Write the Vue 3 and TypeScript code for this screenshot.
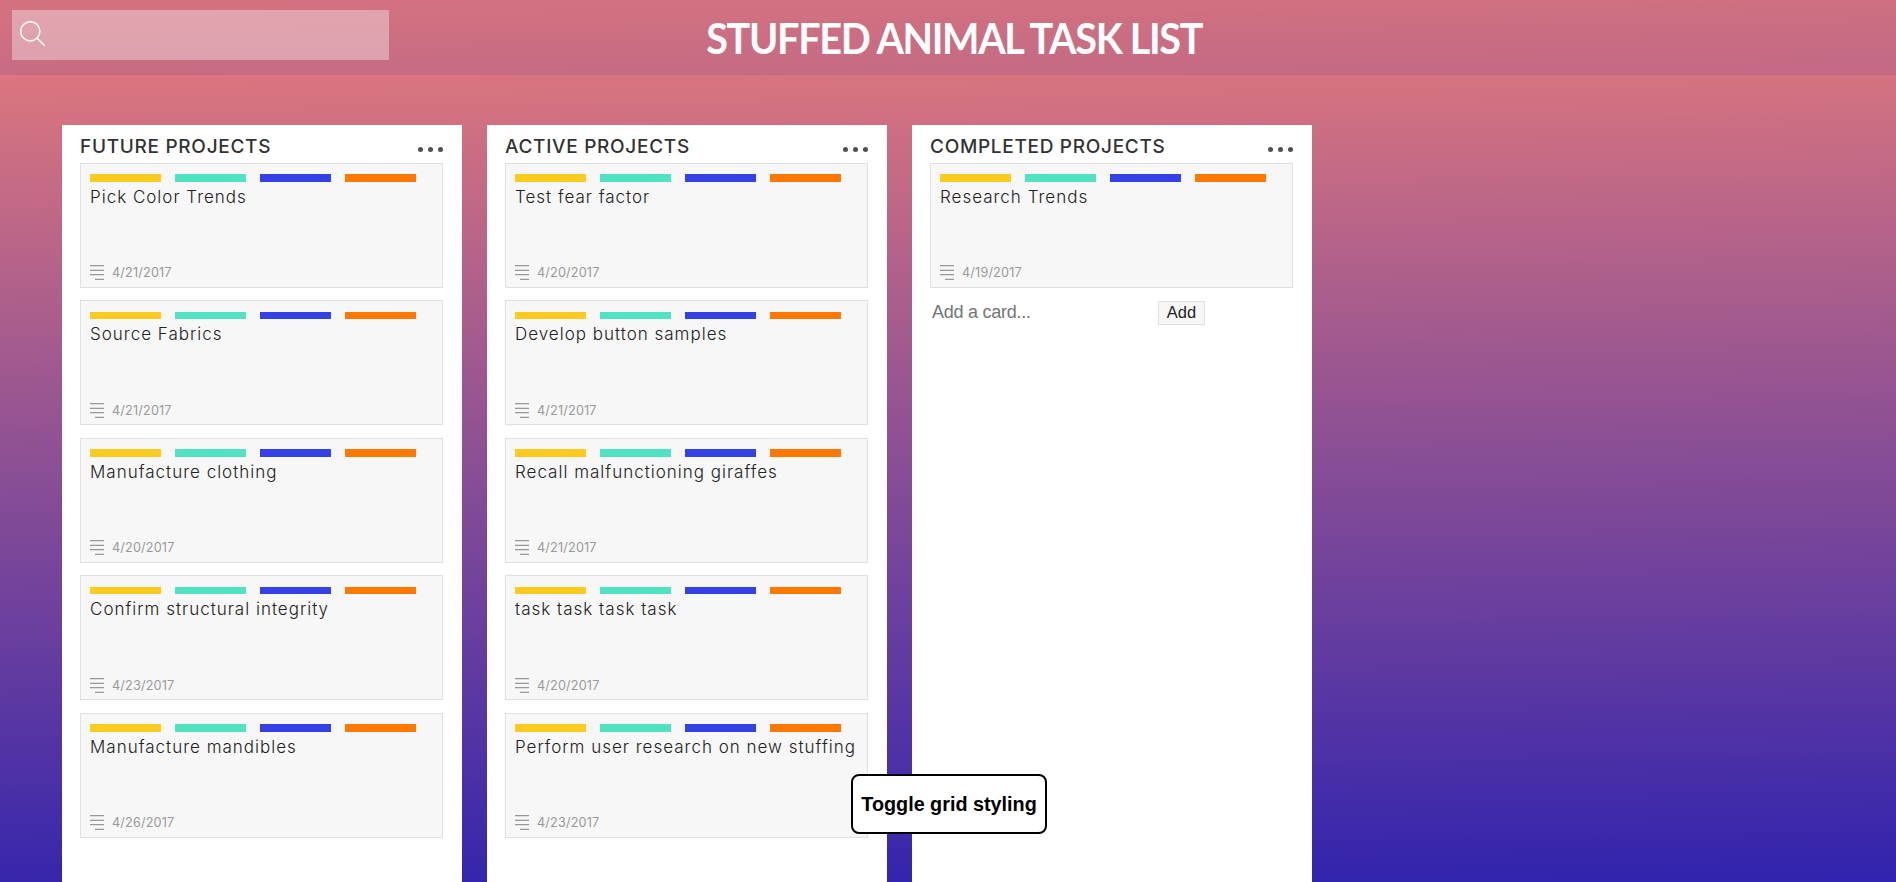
<script setup lang="ts">
interface Card { title: string; date: string }
interface Column { name: string; cards: Card[]; canAdd?: boolean }

const labels = ['yellow', 'mint', 'blue', 'orange']

const columns: Column[] = [
  {
    name: 'Future Projects',
    cards: [
      { title: 'Pick Color Trends', date: '4/21/2017' },
      { title: 'Source Fabrics', date: '4/21/2017' },
      { title: 'Manufacture clothing', date: '4/20/2017' },
      { title: 'Confirm structural integrity', date: '4/23/2017' },
      { title: 'Manufacture mandibles', date: '4/26/2017' },
    ],
  },
  {
    name: 'Active Projects',
    cards: [
      { title: 'Test fear factor', date: '4/20/2017' },
      { title: 'Develop button samples', date: '4/21/2017' },
      { title: 'Recall malfunctioning giraffes', date: '4/21/2017' },
      { title: 'task task task task', date: '4/20/2017' },
      { title: 'Perform user research on new stuffing', date: '4/23/2017' },
    ],
  },
  {
    name: 'Completed Projects',
    cards: [{ title: 'Research Trends', date: '4/19/2017' }],
    canAdd: true,
  },
]
</script>

<template>
  <div class="page">
    <header class="topbar">
      <div class="search">
        <svg class="search-icon" width="26" height="26" viewBox="0 0 26 26">
          <circle cx="10.3" cy="10.3" r="9.6" />
          <path d="M17 17L24.6 24.6" />
        </svg>
      </div>
      <h1>STUFFED ANIMAL TASK LIST</h1>
    </header>

    <main class="board">
      <section v-for="col in columns" :key="col.name" class="column">
        <div class="column-head">
          <h2>{{ col.name }}</h2>
          <svg class="dots" width="25" height="5" viewBox="0 0 25 5">
            <circle cx="2.5" cy="2.5" r="2.5" />
            <circle cx="12.5" cy="2.5" r="2.5" />
            <circle cx="22.5" cy="2.5" r="2.5" />
          </svg>
        </div>
        <article v-for="card in col.cards" :key="card.title" class="card">
          <div class="labels">
            <span v-for="l in labels" :key="l" class="label" :class="l"></span>
          </div>
          <h3>{{ card.title }}</h3>
          <div class="meta">
            <svg width="14" height="15" viewBox="0 0 14 15">
              <path class="soft" d="M0 1.5H14M0 4.5H14M0 10.5H14M5 13.5H14" />
              <path class="line" d="M0 .5H14M0 5.5H14M0 9.5H14M5 14.5H14" />
            </svg>
            <time>{{ card.date }}</time>
          </div>
        </article>
        <form v-if="col.canAdd" class="add" @submit.prevent>
          <input type="text" placeholder="Add a card..." />
          <button type="submit">Add</button>
        </form>
      </section>
    </main>

    <button class="toggle" type="button">Toggle grid styling</button>
  </div>
</template>

<style>
body {
  margin: 0;
  overflow: hidden;
}
</style>

<style scoped>
.page {
  height: 882px;
  overflow: hidden;
  display: flex;
  flex-direction: column;
  background: linear-gradient(179deg, #eb7d7a 0%, #3023ae 100%);
  font-family: Inter, "Liberation Sans", sans-serif;
  color: #333;
}
.topbar {
  flex: none;
  display: grid;
  grid-template-columns: 377px 1fr 377px;
  height: 75px;
  padding: 10px 12px 0;
  box-sizing: border-box;
  background: rgba(48, 35, 174, 0.115);
}
.search {
  height: 50px;
  padding: 11px 8px;
  box-sizing: border-box;
  background: rgba(255, 255, 255, 0.36);
}
.search-icon {
  display: block;
  fill: none;
  stroke: #fff;
  stroke-width: 1.5;
}
h1 {
  margin: 0;
  padding-left: 13px;
  text-align: center;
  white-space: nowrap;
  color: #fff;
  font: 700 41.5px/56px Lato, sans-serif;
  letter-spacing: -1.4px;
  transform: scaleX(0.954);
}
.board {
  flex: none;
  display: flex;
  gap: 25px;
  padding: 50px 62px 0;
}
.column {
  width: 400px;
  height: 757px;
  box-sizing: border-box;
  padding: 0 19px 0 18px;
  background: #fff;
}
.column-head {
  display: flex;
  justify-content: space-between;
  height: 38px;
}
.column-head h2 {
  margin: 10px 0 0;
  font-size: 19px;
  line-height: 24px;
  font-weight: 500;
  text-transform: uppercase;
  letter-spacing: 0.7px;
}
.dots {
  margin-top: 22px;
  fill: #505050;
}
.card {
  display: flex;
  flex-direction: column;
  height: 125px;
  margin-bottom: 12.45px;
  box-sizing: border-box;
  border: 1px solid #e1e1e1;
  background: #f7f7f7;
  padding: 10.2px 9px 6.8px;
}
.labels {
  display: flex;
  gap: 14px;
}
.label {
  width: 71px;
  height: 7.8px;
}
.yellow { background: #fdca1e; }
.mint { background: #50e3c2; }
.blue { background: #3341e6; }
.orange { background: #ff7800; }
.card h3 {
  margin: 4px 0 0;
  color: #222;
  font-size: 17px;
  line-height: 22px;
  font-weight: 300;
  letter-spacing: 1px;
  white-space: nowrap;
}
.meta {
  display: flex;
  align-items: center;
  gap: 8px;
  height: 15px;
  margin-top: auto;
}
.meta .line { stroke: #999; }
.meta .soft { stroke: #ddd; }
.meta time {
  color: #999;
  font-size: 12.7px;
  line-height: 15px;
  letter-spacing: 0.15px;
}
.add {
  display: flex;
  padding-top: 0.55px;
}
.add input {
  width: 228px;
  height: 24px;
  padding: 0 2px;
  box-sizing: border-box;
  border: 0;
  background: transparent;
  font: 18px "Liberation Sans", Arial, sans-serif;
  letter-spacing: -0.25px;
}
.add input::placeholder { color: #757575; }
.add button {
  width: 47px;
  height: 24px;
  padding: 0;
  border: 1px solid #e1e1e1;
  background: #f7f7f7;
  color: #222;
  font: 16.5px/21px "Liberation Sans", Arial, sans-serif;
}
.toggle {
  position: fixed;
  left: 851px;
  top: 774px;
  width: 196px;
  height: 60px;
  padding: 0;
  border: 2px solid #000;
  border-radius: 8px;
  background: #fff;
  color: #000;
  font: bold 19.8px "Liberation Sans", Arial, sans-serif;
}
</style>
